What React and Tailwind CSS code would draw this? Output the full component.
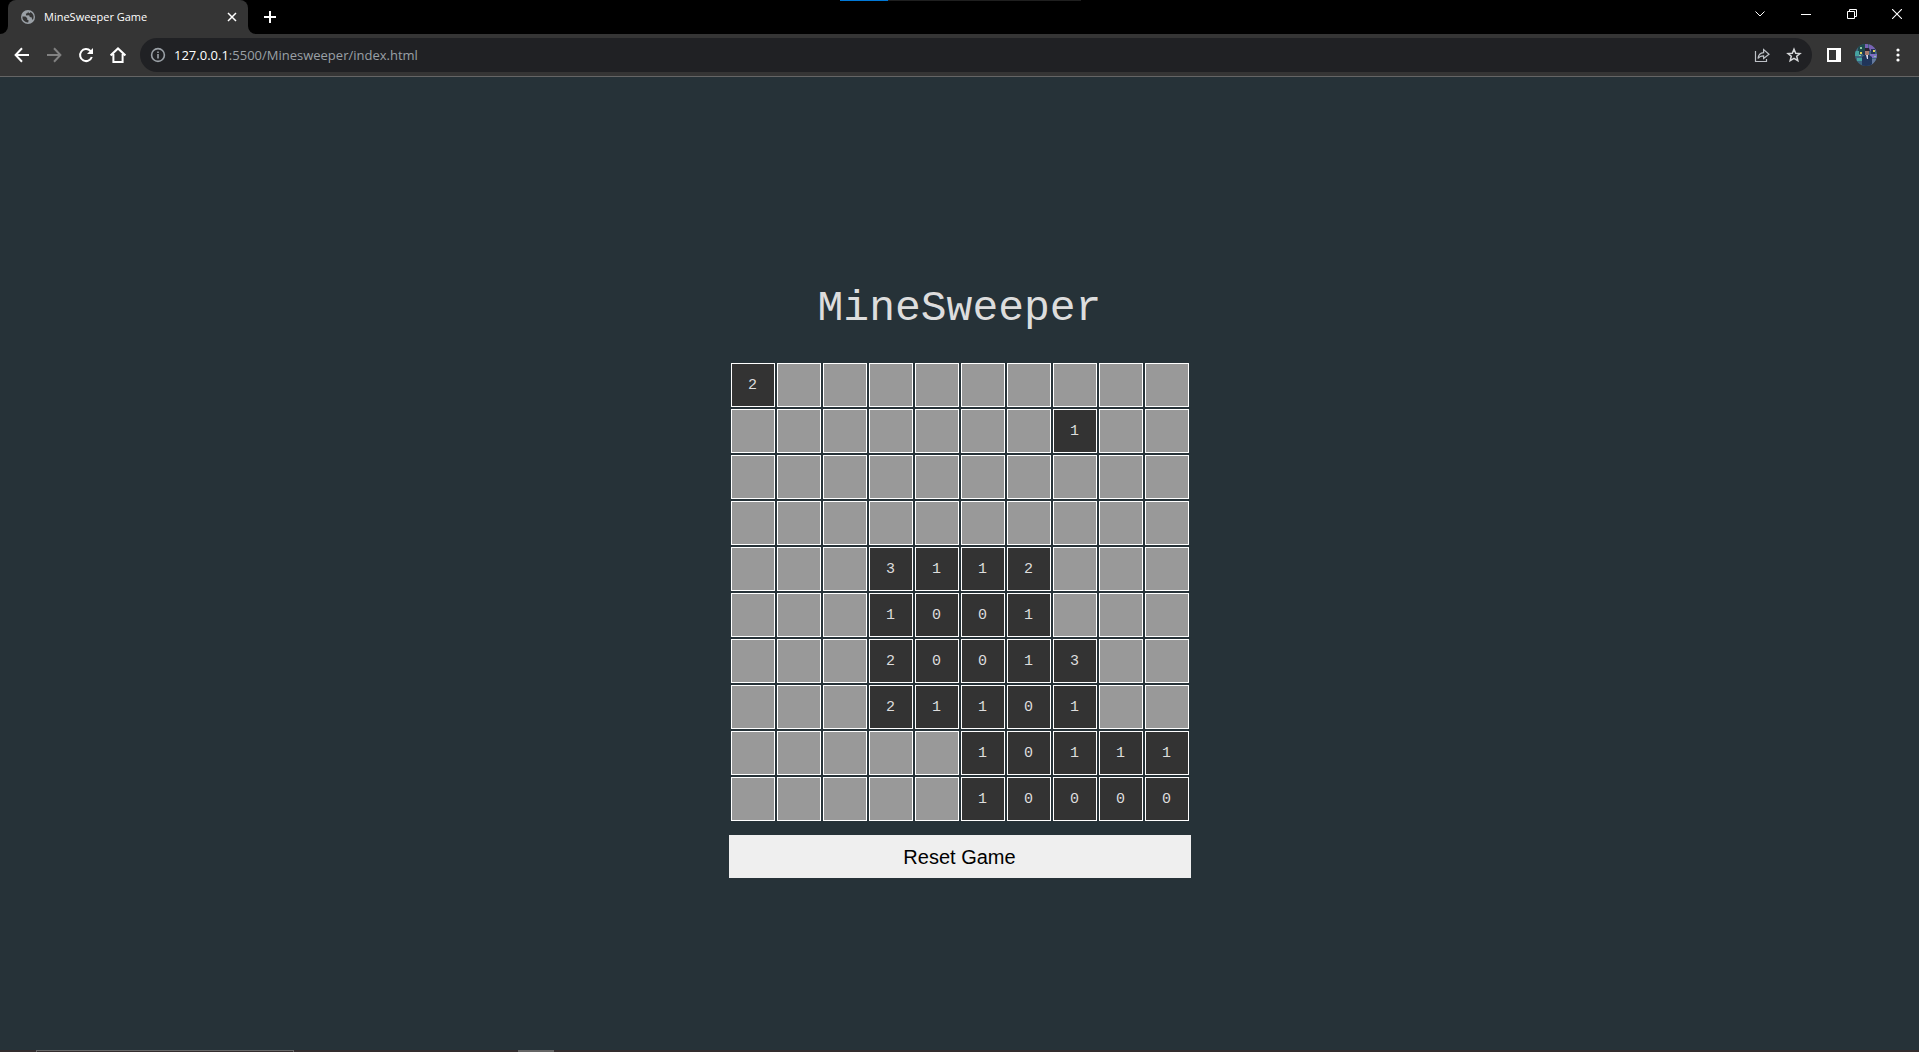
import React, { useState } from "react";

const H = null;
const INITIAL = [
  [2, H, H, H, H, H, H, H, H, H],
  [H, H, H, H, H, H, H, 1, H, H],
  [H, H, H, H, H, H, H, H, H, H],
  [H, H, H, H, H, H, H, H, H, H],
  [H, H, H, 3, 1, 1, 2, H, H, H],
  [H, H, H, 1, 0, 0, 1, H, H, H],
  [H, H, H, 2, 0, 0, 1, 3, H, H],
  [H, H, H, 2, 1, 1, 0, 1, H, H],
  [H, H, H, H, H, 1, 0, 1, 1, 1],
  [H, H, H, H, H, 1, 0, 0, 0, 0],
];
const EMPTY = INITIAL.map((row) => row.map(() => H));

function IconButton({ label, className, children }) {
  return (
    <button type="button" aria-label={label} className={"flex shrink-0 items-center justify-center " + className}>
      {children}
    </button>
  );
}

function Globe() {
  return (
    <svg viewBox="0 0 14 14" className="size-3.5 shrink-0" aria-hidden="true">
      <circle cx="7" cy="7" r="7" fill="#9aa0a6" />
      <path d="M1.4 6.4 4.4 6.4 6.3 8.2 6 9.4 7.6 10.2 7.2 12.6A5.6 5.6 0 0 1 1.4 6.4Z" fill="#353535" />
      <path d="M7 1.4 6.6 3 4.8 3.8 5.2 5.4 8.2 5.2 8.8 7 10.8 7.6 11 9.6 12 9.400A5.6 5.6 0 0 0 9.400 1.900L8.800 3.200 7.600 2.800Z" fill="#353535" />
    </svg>
  );
}

function TabStrip() {
  return (
    <header className="relative flex h-[34px] items-stretch bg-black text-white">
      <div className="absolute top-0 left-[840px] flex h-px w-[241px] bg-[#1f1f1f]">
        <div className="w-12 bg-[#0078d7]" />
      </div>
      <div className="flex w-2 items-end bg-[#353535]">
        <div className="h-full w-full rounded-br-lg bg-black" />
      </div>
      <div className="flex w-60 items-center rounded-t-lg bg-[#353535] pr-2 pl-[13px]">
        <Globe />
        <span className="ml-[9px] flex-1 text-[11px] leading-4">MineSweeper Game</span>
        <IconButton label="Close tab" className="size-4">
          <svg viewBox="0 0 16 16" className="size-4" stroke="#fff" strokeWidth="1.5">
            <path d="M4 4l8 8M12 4l-8 8" />
          </svg>
        </IconButton>
      </div>
      <div className="flex w-2 bg-[#353535]">
        <div className="h-full w-full rounded-bl-lg bg-black" />
      </div>
      <IconButton label="New tab" className="w-7">
        <svg viewBox="0 0 12 12" className="size-3" stroke="#fff" strokeWidth="2">
          <path d="M6 0v12M0 6h12" />
        </svg>
      </IconButton>
      <div className="ml-auto flex pb-1.5">
        <IconButton label="Search tabs" className="w-[46px]">
          <svg viewBox="0 0 10 6" className="h-1.5 w-2.5" fill="none" stroke="#fff">
            <path d="M.5.5 5 5 9.5.5" />
          </svg>
        </IconButton>
        <IconButton label="Minimize" className="w-[46px]">
          <svg viewBox="0 0 10 10" className="size-2.5" fill="#fff">
            <path d="M0 5h10v1H0z" />
          </svg>
        </IconButton>
        <IconButton label="Restore" className="w-[46px]">
          <svg viewBox="0 0 10 10" className="size-2.5" fill="none" stroke="#fff">
            <path d="M.5 2.5h7v7h-7zM2.5 2.5v-2h7v7h-2" />
          </svg>
        </IconButton>
        <IconButton label="Close" className="w-11">
          <svg viewBox="0 0 10 10" className="size-2.5" stroke="#fff" strokeWidth="1.1">
            <path d="M0 0l10 10M10 0 0 10" />
          </svg>
        </IconButton>
      </div>
    </header>
  );
}

function Toolbar() {
  return (
    <nav className="flex h-[43px] items-center border-b border-[#656565] bg-[#353535] pl-1.5 text-white">
      <IconButton label="Back" className="size-8">
        <svg viewBox="0 0 16 16" className="size-4" fill="none" stroke="#fff" strokeWidth="2">
          <path d="M15 8H2M8 1.2 1.6 8 8 14.8" />
        </svg>
      </IconButton>
      <IconButton label="Forward" className="size-8">
        <svg viewBox="0 0 16 16" className="size-4" fill="none" stroke="#818181" strokeWidth="2">
          <path d="M1 8h13M8 1.2 14.4 8 8 14.8" />
        </svg>
      </IconButton>
      <IconButton label="Reload" className="size-8">
        <svg viewBox="0 0 16 16" className="size-4" fill="none" stroke="#fff" strokeWidth="2">
          <path d="M13.8 10A6 6 0 1 1 12.4 3.9L14 5.4" />
          <path d="M15 1v6H9l2.4-2.4z" fill="#fff" stroke="none" />
        </svg>
      </IconButton>
      <IconButton label="Home" className="size-8">
        <svg viewBox="0 0 16 16" className="size-4" fill="none" stroke="#fff" strokeWidth="2">
          <path d="M.6 8.4 8 1.4l7.4 7M3.4 7v8h9.2V7" />
        </svg>
      </IconButton>
      <div className="ml-1.5 flex h-[34px] flex-1 items-center rounded-full bg-[#202124] pr-2.5 pl-2.5">
        <IconButton label="View site information" className="size-4">
          <svg viewBox="0 0 16 16" className="size-4" fill="none" stroke="#9aa0a6" strokeWidth="1.6">
            <circle cx="8" cy="8" r="6.4" />
            <path d="M8 7v4.4M8 4.4V6" />
          </svg>
        </IconButton>
        <a href="#board" className="ml-2 flex-1 text-[13px] leading-5 text-[#9aa0a6]">
          <span className="text-white">127.0.0.1</span>:5500/Minesweeper/index.html
        </a>
        <IconButton label="Share this page" className="size-8">
          <svg viewBox="0 0 16 16" className="size-4" fill="none" stroke="#bdc1c6" strokeWidth="1.2">
            <path d="M1.500 4v10.500h11V12" />
            <path d="M4 11.500c.4-3.600 2.400-5.600 5.600-5.800V2.600L15 7.200 9.600 11.500V8.800C7 8.800 5.300 9.500 4 11.500Z" />
          </svg>
        </IconButton>
        <IconButton label="Bookmark this tab" className="-mr-2 size-8">
          <svg viewBox="0 0 16 16" className="size-4" fill="none" stroke="#d6d8da" strokeWidth="1.5">
            <path d="M8 2.200 9.700 6.200 14 6.500 10.700 9.300 11.800 13.600 8 11.300 4.200 13.600 5.300 9.300 2 6.500 6.300 6.200Z" />
          </svg>
        </IconButton>
      </div>
      <IconButton label="Side panel" className="ml-1.5 size-8">
        <svg viewBox="0 0 14 14" className="size-3.5">
          <path fillRule="evenodd" d="M0 0h14v14H0zM2 2v10h7V2z" fill="#fff" />
        </svg>
      </IconButton>
      <IconButton label="Profile" className="size-8">
        <svg viewBox="0 0 22 22" className="size-[22px] rounded-full">
          <path d="M0 0h22v22H0z" fill="#3e6680" />
          <path d="M3 0h7v10H3z" fill="#1d4a4c" />
          <path d="M10 0h3v5h-3zM14 0h8v7h-8z" fill="#7a63b4" />
          <path d="M16 5h4v5h-4zM8 7h2v4H8z" fill="#253556" />
          <path d="M0 7h4v5H0zM2 14h5v3H2z" fill="#46a3a0" />
          <path d="M15 10h7v4h-7z" fill="#7d6fc0" />
          <path d="M16 15h6v7h-6z" fill="#65799d" />
          <path d="M7 22V13l3-2h4l3 2v9z" fill="#20355a" />
          <path d="M10 6h4v5h-4z" fill="#a77c6e" />
          <path d="M10 4h4l1 3h-5z" fill="#292331" />
          <path d="M11 11h2v4h-1z" fill="#d7d9ea" />
          <path d="M5 8h2v2H5zM18 6h2v2h-2z" fill="#e6d65b" />
          <path d="M5 3h2v2H5zM4 11h2v1H4zM19 12h2v1h-2z" fill="#8fc7a2" />
        </svg>
      </IconButton>
      <IconButton label="Menu" className="mr-[5px] size-8">
        <svg viewBox="0 0 4 14" className="h-3.5 w-1" fill="#fff">
          <circle cx="2" cy="2" r="1.600" />
          <circle cx="2" cy="7" r="1.600" />
          <circle cx="2" cy="12" r="1.600" />
        </svg>
      </IconButton>
    </nav>
  );
}

function Board({ cells, onOpen }) {
  return (
    <table id="board" aria-label="Minefield" className="border-separate border-spacing-[2px]">
      <tbody>
        {cells.map((row, r) => (
          <tr key={r}>
            {row.map((value, c) => (
              <td key={c} className="p-0">
                <button
                  type="button"
                  aria-label={"Row " + (r + 1) + ", column " + (c + 1)}
                  onClick={() => onOpen(r, c)}
                  className={
                    "block size-11 border border-white text-center text-[15px] leading-none text-[#dddddd] " +
                    (value === null ? "bg-[#999999]" : "bg-[#333333]")
                  }
                >
                  {value}
                </button>
              </td>
            ))}
          </tr>
        ))}
      </tbody>
    </table>
  );
}

export default function App() {
  const [cells, setCells] = useState(INITIAL);
  const open = (r, c) =>
    setCells((prev) => prev.map((row, i) => row.map((v, j) => (i === r && j === c && v === null ? 0 : v))));

  return (
    <div className="flex min-h-screen flex-col bg-[#263238] font-['Open_Sans',sans-serif]">
      <TabStrip />
      <Toolbar />
      <main className="flex flex-1 flex-col items-center justify-center font-['Liberation_Mono',monospace]">
        <div className="flex flex-col">
          <h1 className="pt-9 pb-7 text-center text-[43px] leading-[48px] text-[#dddddd]">MineSweeper</h1>
          <Board cells={cells} onOpen={open} />
          <button
            type="button"
            onClick={() => setCells(EMPTY)}
            className="mt-3 h-[43px] bg-[#efefef] font-['Liberation_Sans',sans-serif] text-[20px] text-black"
          >
            Reset Game
          </button>
        </div>
      </main>
      <footer aria-hidden="true" className="flex h-0.5 bg-[#332d2e] pl-9">
        <div className="w-[258px] border border-b-0 border-[#666666]" />
        <div className="ml-56 w-9 bg-[#666666]" />
      </footer>
    </div>
  );
}
